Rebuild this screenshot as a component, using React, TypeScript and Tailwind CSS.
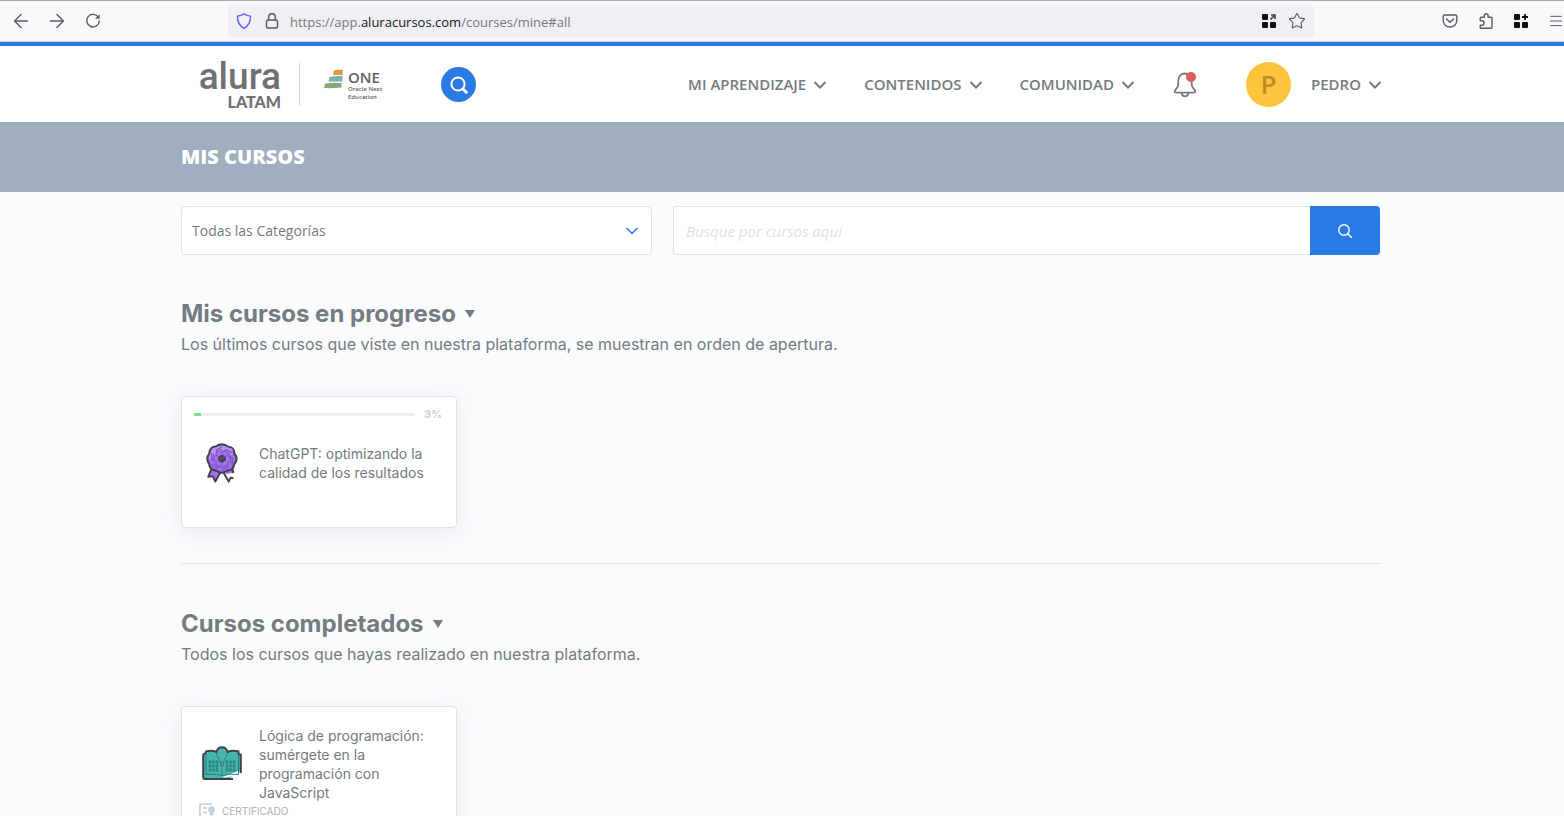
import { ArrowLeft, ArrowRight, Menu, Star } from "lucide-react";
import type { ReactNode } from "react";

function Chevron({ className = "stroke-2" }: { className?: string }) {
    return (
        <svg viewBox="0 0 14 10" fill="none" stroke="currentColor" className={`w-[14px] h-[10px] ${className}`}>
            <path d="M1.500 2L7 7.500 12.500 2" />
        </svg>
    );
}

function Squares({ arrow = false }: { arrow?: boolean }) {
    return (
        <svg viewBox="0 0 14 14" className="w-[14px] h-[14px]">
            <g fill="#111">
                <rect width="6" height="6" rx="1" />
                <rect y="8" width="6" height="6" rx="1" />
                <rect x="8" y="8" width="6" height="6" rx="1" />
            </g>
            {arrow ? (
                <path d="M9 1h4v4M13 1L8.500 5.500" stroke="#444" strokeWidth="1.600" fill="none" />
            ) : (
                <path d="M11 0v6M8 3h6" stroke="#111" strokeWidth="1.800" />
            )}
        </svg>
    );
}

function Toolbar() {
    return (
        <div className="shrink-0 h-[42px] flex items-center bg-[#f9f9fb] border-t border-[#a9a9ad] border-b border-b-[#cccdd3] text-[#5b5b66]">
            <div className="flex items-center gap-3 pl-[9px] w-[228px]">
                <button aria-label="Atrás" className="w-6 flex justify-center"><ArrowLeft size={22} strokeWidth={1.5} /></button>
                <button aria-label="Adelante" className="w-6 flex justify-center"><ArrowRight size={22} strokeWidth={1.5} /></button>
                <button aria-label="Recargar" className="w-6 flex justify-center">
                    <svg viewBox="0 0 16 16" className="w-4 h-4" fill="none" stroke="currentColor" strokeWidth="1.400">
                        <path d="M13.300 4.200A6.300 6.300 0 1 0 14.300 8" strokeLinecap="round" />
                        <path d="M14.600 1.200v4.500h-4.500z" fill="currentColor" stroke="none" />
                    </svg>
                </button>
            </div>
            <div className="flex-1 h-8 flex items-center rounded bg-[#f0f0f4] px-2">
                <svg viewBox="0 0 16 16" className="w-4 h-4" fill="none" strokeWidth="1.400">
                    <defs>
                        <linearGradient id="shield" x1="0" y1="1" x2="1" y2="0">
                            <stop offset="0" stopColor="#2b5fd9" />
                            <stop offset="1" stopColor="#9059ff" />
                        </linearGradient>
                    </defs>
                    <path d="M8 .8c2 1.300 4 2 6.500 2.300C14.700 9 12.500 13 8 15.300 3.500 13 1.300 9 1.500 3.100 4 2.800 6 2.100 8 .8z" stroke="url(#shield)" strokeLinejoin="round" />
                </svg>
                <svg viewBox="0 0 16 16" className="w-4 h-4 ml-3" fill="none" stroke="currentColor" strokeWidth="1.500">
                    <rect x="2.500" y="7" width="11" height="8" rx="1.500" />
                    <path d="M4.700 7V4a3.300 3.300 0 0 1 6.600 0v3" />
                </svg>
                <span className="ml-[10px] pt-1 font-['Open_Sans',sans-serif] text-[13px] text-[#77777f]">
                    https://app.<span className="text-[#15141a]">aluracursos.com</span>/courses/mine#all
                </span>
                <div className="ml-auto flex items-center gap-3">
                    <Squares arrow />
                    <button aria-label="Añadir a marcadores"><Star size={18} strokeWidth={1.5} className="block" /></button>
                </div>
            </div>
            <div className="w-[250px] flex items-center justify-end gap-5">
                <svg viewBox="0 0 16 16" className="w-4 h-4" fill="none" stroke="currentColor" strokeWidth="1.400">
                    <path d="M2.500 2h11c.8 0 1.300.5 1.300 1.300V7.500c0 3.700-3 6.500-6.800 6.500S1.200 11.200 1.200 7.500V3.300C1.200 2.500 1.700 2 2.500 2z" />
                    <path d="M4.500 6L8 9.300 11.500 6" strokeLinecap="round" />
                </svg>
                <svg viewBox="0 0 16 16" className="w-4 h-4" fill="none" stroke="currentColor" strokeWidth="1.400" strokeLinejoin="round">
                    <path d="M2.200 7V5.300c0-.6.400-1 1-1h3.100V2.600a1.900 1.900 0 0 1 3.800 0v1.700h2.900c.6 0 1 .4 1 1v9c0 .6-.4 1-1 1H3.200c-.6 0-1-.4-1-1v-2h1.600a1.900 1.900 0 0 0 0-4.600H2.200z" />
                </svg>
                <Squares />
                <Menu size={16} strokeWidth={1.5} />
            </div>
        </div>
    );
}

function NavItem({ children }: { children: ReactNode }) {
    return (
        <button className="flex items-center gap-[7px] text-[15px] font-semibold text-[#747c81]">
            {children}
            <Chevron />
        </button>
    );
}

function Header() {
    return (
        <header className="border-t-4 border-[#2a7ae4] bg-white">
            <div className="max-w-[1202px] mx-auto h-[76px] pt-px pr-px flex items-center font-['Open_Sans',sans-serif]">
                <a href="#" className="ml-[18px] w-[82px] flex flex-col items-end text-[#6f7073]">
                    <span className="font-['Roboto',sans-serif] font-medium text-[37px] leading-[34px]">alura</span>
                    <span className="font-['Lato',sans-serif] font-black text-base leading-4">LATAM</span>
                </a>
                <div className="ml-[18px] w-px h-[43px] bg-[#d3d6da]" />
                <a href="#" className="ml-6 flex items-start gap-1 text-[#67605b]">
                    <svg viewBox="0 0 20 20" className="w-5 h-5">
                        <path d="M10 1.500Q14 .5 18.500 .8V6H9z" fill="#e3923d" />
                        <path d="M5.500 8Q12 6.500 18.500 7V12.500H4.500z" fill="#77b0b0" />
                        <path d="M1 14.800Q9 13 17.500 14V18.500Q9 19.500 0 19z" fill="#8aa873" />
                    </svg>
                    <span className="w-[34px] flex flex-col">
                        <span className="text-[15px] leading-4 font-semibold">ONE</span>
                        <span className="text-[6px] leading-[8px] font-semibold whitespace-nowrap">Oracle Next<br />Education</span>
                    </span>
                </a>
                <button aria-label="Buscar" className="ml-[59px] w-[35px] h-[35px] rounded-full bg-[#2a7ae4] text-white flex items-center justify-center">
                    <svg viewBox="0 0 18 18" className="w-[18px] h-[18px]" fill="none" stroke="currentColor">
                        <circle cx="8" cy="8" r="6.600" strokeWidth="2" />
                        <path d="M13 13l3.300 3.300" strokeWidth="3" strokeLinecap="round" />
                    </svg>
                </button>
                <nav className="ml-auto flex items-center gap-[37px]">
                    <NavItem>MI APRENDIZAJE</NavItem>
                    <NavItem>CONTENIDOS</NavItem>
                    <NavItem>COMUNIDAD</NavItem>
                </nav>
                <button aria-label="Notificaciones" className="ml-[38px]">
                    <svg viewBox="0 0 24 26" className="w-6 h-[26px]" fill="none" stroke="#747c81" strokeWidth="1.800">
                        <path d="M12 1.500c-4.200 0-6.700 3-6.700 7v4.300c0 2-.9 3-2.500 4.600-1.500 1.500-1.700 3.200.5 3.200h17.400c2.200 0 2-1.700.5-3.200-1.600-1.600-2.500-2.600-2.500-4.600V8.500c0-4-2.500-7-6.700-7z" />
                        <path d="M8.500 21c.5 2.300 1.600 3.300 3.500 3.300s3-1 3.500-3.300" />
                        <circle cx="18" cy="5" r="5" fill="#dc5b5b" stroke="none" />
                    </svg>
                </button>
                <span className="ml-[49px] mr-5 w-[45px] h-[45px] rounded-full bg-[#ffc43d] text-[#c08a2b] font-semibold text-[26px] flex items-center justify-center">
                    P
                </span>
                <NavItem>PEDRO</NavItem>
            </div>
        </header>
    );
}

function Filters() {
    return (
        <form className="mt-[14px] pr-px flex gap-[21px] font-['Open_Sans',sans-serif] text-sm">
            <div className="w-[471px] grid items-center">
                <select aria-label="Categorías" className="col-start-1 row-start-1 h-[49px] w-full appearance-none rounded bg-white border border-[#dfe4e9] px-[10px] text-[#747c81]">
                    <option>Todas las Categorías</option>
                </select>
                <Chevron className="col-start-1 row-start-1 justify-self-end mr-[13px] stroke-[1.5] text-[#2a7ae4] pointer-events-none" />
            </div>
            <div className="flex-1 flex">
                <input
                    type="text"
                    aria-label="Buscar cursos"
                    placeholder="Busque por cursos aqui"
                    className="flex-1 h-[49px] rounded-l border border-r-0 border-[#dfe4e9] bg-white px-3 text-[15px] outline-none placeholder:italic placeholder:text-[#dfe2e5]"
                />
                <button type="button" aria-label="Buscar" className="w-[70px] rounded-r bg-[#2a7ae4] text-white flex items-center justify-center">
                    <svg viewBox="0 0 14 14" className="w-[14px] h-[14px]" fill="none" stroke="currentColor" strokeWidth="1.400">
                        <circle cx="6" cy="6" r="5.200" />
                        <path d="M9.800 9.800l4 4" />
                    </svg>
                </button>
            </div>
        </form>
    );
}

function RosetteIcon() {
    return (
        <svg viewBox="-2 -1 42 44" className="shrink-0 w-10 h-[42px]" strokeLinejoin="round">
            <path d="M9 26L4.500 35.500l5-.5 2.500 5L19 29zM31 25l1 6-8 1.500-5-6z" fill="#a36ff0" />
            <path d="M8 27L4.500 35.500l5-.5 2.500 5.500 6-11M20 30l6 10.500 2-4 3 .5M29 27l2 4.500" fill="none" stroke="#444248" strokeWidth="2" />
            <path d="M13 3.500Q19-1 25.500 4 32 4.500 32 11q4.500 5.500 0 11-1 7-7.500 7-6 4.500-11.500 0-7-.5-7.500-7-4-5.500 0-10.500Q6 4 13 3.500z" fill="#a36ff0" stroke="#444248" strokeWidth="2.200" />
            <path d="M13 4.500q6-4 12 0l5 1.500v7l-11-5-9 5-4 5q-1-5 1-7 0-6 6-6.500z" fill="#ba92f6" />
            <g fill="none" stroke="#7a52bd" strokeWidth="1.200">
                {[0, 60, 120, 180, 240, 300].map((angle) => (
                    <path key={angle} d="M13 14V7.500L19 4M13 10l6-3.500" transform={`rotate(${angle} 19 16.500)`} />
                ))}
            </g>
            <path d="M19 12l4 2.500v4L19 21 15 18.500v-4z" fill="#444248" />
            <path d="M16 15l2.500 2 4-3" fill="none" stroke="#7a52bd" strokeWidth="1" />
        </svg>
    );
}

function BookIcon() {
    return (
        <svg viewBox="0 0 40 36" className="shrink-0 w-10 h-9" strokeLinejoin="round">
            <path d="M2 7h3.500V4.500Q11 4 14.500 6 15.500 1.500 20 1.500T25.500 6Q29 4 35.500 4.500V7H38V26L28 32H2z" fill="#46b5ad" />
            <path d="M20 31l17.500-6.500V29L24 31.500z" fill="#fff" />
            <path d="M31 33H2.500Q1.200 33 1.200 31.500V9Q1.200 7.500 2.500 7.500H4V5.500Q10 4 14.500 6 15.500 1.200 20 1.200T25.500 6Q30 4 36.500 5.500v3h2.300V27" fill="none" stroke="#444248" strokeWidth="2" />
            <path d="M4 7v21.500q10-1 16 1 8-2 16.500-1V8M20 20v9.500M14.500 7q0 3.500 3 6.500l1 3h3l1-3q3-3 3-6.500M18.500 17v2.500h3V17" fill="none" stroke="#327c79" strokeWidth="1" />
            <g fill="none" stroke="#287b76" strokeWidth="1">
                {[16, 20, 24].map((y) =>
                    [8, 11.5, 15, 25, 28.5, 32].map((x) => <ellipse key={`${x}-${y}`} cx={x} cy={y} rx="1" ry="1.500" />)
                )}
            </g>
        </svg>
    );
}

function CertificateIcon() {
    return (
        <svg viewBox="0 0 17 16" className="w-[17px] h-4" fill="none" stroke="#c3d0dc" strokeWidth="1.600">
            <path d="M13 1H1v13h8M4 5h4M4 9.500h4" />
            <circle cx="12.500" cy="6.500" r="3.300" fill="#c3d0dc" stroke="none" />
            <path d="M10.800 8v5l1.700-1 1.700 1V8z" fill="#c3d0dc" stroke="none" />
        </svg>
    );
}

function Section({ title, text, children }: { title: string; text: string; children: ReactNode }) {
    return (
        <section className="pt-[43px] text-[#747c81]">
            <h2 className="flex items-center gap-[9px] text-2xl font-bold">
                {title}
                <svg viewBox="0 0 10 8" className="w-[10px] h-2" fill="currentColor"><path d="M0 0h10L5 8z" /></svg>
            </h2>
            <p className="mt-0.5 text-base">{text}</p>
            <div className="mt-10">{children}</div>
        </section>
    );
}

const cardClass = "block w-[276px] h-[132px] bg-white border border-[#dfe4e9] rounded shadow-[0_4px_20px_rgba(160,175,200,0.2)]";

export default function App() {
    const progress = 3;

    return (
        <div className="h-screen flex flex-col overflow-hidden bg-[#fafbfd] font-['Inter',sans-serif]">
            <Toolbar />
            <div className="flex-1 min-h-0 overflow-y-auto [scrollbar-width:none]">
                <Header />
                <div className="bg-[#a0aebf]">
                    <h1 className="max-w-[1202px] mx-auto h-[70px] flex items-center font-['Open_Sans',sans-serif] font-extrabold text-xl text-white">
                        MIS CURSOS
                    </h1>
                </div>
                <main className="max-w-[1202px] mx-auto pr-0.5">
                    <Filters />
                    <Section title="Mis cursos en progreso" text="Los últimos cursos que viste en nuestra plataforma, se muestran en orden de apertura.">
                        <a href="#" className={`${cardClass} px-3 pt-[9px]`}>
                            <div className="flex items-center gap-[9px]">
                                <div className="w-[221px] h-[3px] bg-[#eceff2]">
                                    <div className="h-full bg-[#7fdc93]" style={{ width: `${progress}%` }} />
                                </div>
                                <span className="text-[11px] leading-4 font-bold text-[#c5d2e0]">{progress}%</span>
                            </div>
                            <div className="mt-5 flex items-center gap-[17px] pl-2">
                                <RosetteIcon />
                                <span className="flex-1 text-sm leading-[19px]">ChatGPT: optimizando la calidad de los resultados</span>
                            </div>
                        </a>
                    </Section>
                    <hr className="mt-[35px] mb-px border-[#dfe4e9]" />
                    <Section title="Cursos completados" text="Todos los cursos que hayas realizado en nuestra plataforma.">
                        <a href="#" className={`${cardClass} pt-[19px]`}>
                            <div className="flex items-center gap-[17px] px-5">
                                <BookIcon />
                                <span className="flex-1 text-sm leading-[19px]">Lógica de programación: sumérgete en la programación con JavaScript</span>
                            </div>
                            <div className="mt-px flex items-center gap-[6px] pl-[17px] text-[10px] leading-4 text-[#a9b0b6]">
                                <CertificateIcon />
                                CERTIFICADO
                            </div>
                        </a>
                    </Section>
                </main>
            </div>
        </div>
    );
}
